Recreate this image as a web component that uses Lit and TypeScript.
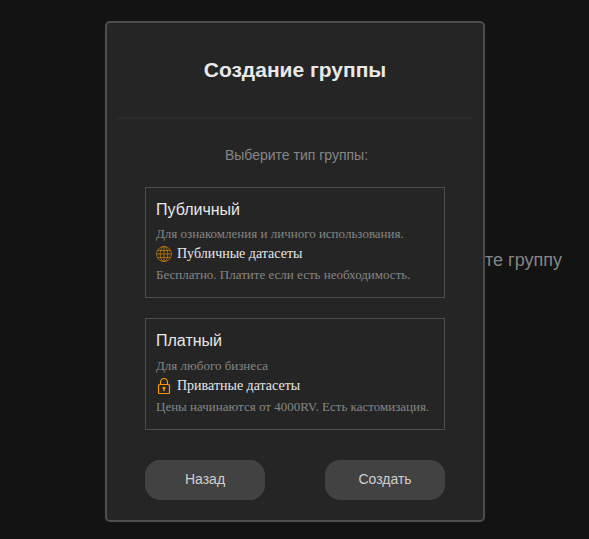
import { LitElement, html, css, svg } from "lit";
import { customElement, property } from "lit/decorators.js";

const globe = svg`
  <circle cx="8" cy="8" r="7.5" />
  <ellipse cx="8" cy="8" rx="3.8" ry="7.5" />
  <path d="M8 .5v15M.5 8h15M2 4.5h12M2 11.5h12" />
`;

const lock = svg`
  <rect x="2.5" y="6.5" width="11" height="9" rx="1" />
  <path d="M4.5 6.5V4.5a3.5 4 0 0 1 7 0v2" />
  <path d="M8 10v3.2" />
  <circle cx="8" cy="10.2" r=".8" />
`;

@customElement("group-card")
class GroupCard extends LitElement {
  @property() heading = "";
  @property() summary = "";
  @property() feature = "";
  @property() price = "";
  @property() icon = "globe";

  static styles = css`
    :host {
      display: flex;
      flex-direction: column;
      box-sizing: border-box;
      border: 1px solid #4d4d4d;
      padding: 10px 10px 12px;
      font: 13px/20px "Liberation Serif", serif;
      color: #858585;
      white-space: nowrap;
    }
    .heading {
      font: 16px/24px "Liberation Sans", sans-serif;
      color: #e8e8e8;
    }
    .summary {
      margin-top: auto;
    }
    .feature {
      display: flex;
      align-items: center;
      gap: 5px;
      font-size: 14px;
      color: #e8e8e8;
    }
    .price {
      margin-top: 1px;
    }
    .icon {
      width: 16px;
      height: 16px;
      fill: none;
      stroke: #ff9800;
    }
    .globe {
      stroke: #c27a0b;
      stroke-width: 0.8;
    }
    .lock {
      stroke-width: 1.2;
    }
  `;

  render() {
    return html`
      <div class="heading">${this.heading}</div>
      <div class="summary">${this.summary}</div>
      <div class="feature">
        <svg class="icon ${this.icon}" viewBox="0 0 16 16">
          ${this.icon === "lock" ? lock : globe}
        </svg>
        <span>${this.feature}</span>
      </div>
      <div class="price">${this.price}</div>
    `;
  }
}

@customElement("app-root")
class AppRoot extends LitElement {
  static styles = css`
    :host {
      display: block;
      position: relative;
      box-sizing: border-box;
      height: 539px;
      padding: 21px 104px 0 105px;
      overflow: hidden;
      background: #131313;
      font-family: "Liberation Sans", Arial, sans-serif;
    }
    .hint {
      position: absolute;
      right: 27px;
      top: 249px;
      font-size: 18px;
      line-height: 22px;
      color: #858585;
      white-space: nowrap;
    }
    .dialog {
      position: relative;
      box-sizing: border-box;
      width: 380px;
      height: 501px;
      border: 2px solid #4d4d4d;
      border-radius: 5px;
      background: #252525;
      display: flex;
      flex-direction: column;
    }
    .title {
      margin: 0 10px;
      height: 94px;
      border-bottom: 2px solid #2b2b2b;
      font-size: 21px;
      font-weight: bold;
      line-height: 94px;
      text-align: center;
      color: #e8e8e8;
    }
    .label {
      margin-top: 26px;
      font-size: 14px;
      line-height: 20px;
      text-align: center;
      color: #858585;
      padding-left: 3px;
    }
    .cards {
      display: grid;
      grid-template-rows: 111px 112px;
      gap: 20px;
      margin: 22px 38px 0;
    }
    .actions {
      display: flex;
      justify-content: space-between;
      margin: 30px 38px 0;
    }
    .button {
      width: 120px;
      height: 40px;
      padding: 0 0 2px;
      border: 0;
      border-radius: 15px;
      background: #424242;
      color: #cfcfcf;
      font: 14px "Liberation Sans", Arial, sans-serif;
    }
  `;

  render() {
    return html`
      <div class="hint">Выберите группу</div>
      <div class="dialog">
        <div class="title">Создание группы</div>
        <div class="label">Выберите тип группы:</div>
        <div class="cards">
          <group-card
            heading="Публичный"
            summary="Для ознакомления и личного использования."
            feature="Публичные датасеты"
            price="Бесплатно. Платите если есть необходимость."
            icon="globe"
          ></group-card>
          <group-card
            heading="Платный"
            summary="Для любого бизнеса"
            feature="Приватные датасеты"
            price="Цены начинаются от 4000RV. Есть кастомизация."
            icon="lock"
          ></group-card>
        </div>
        <div class="actions">
          <button class="button">Назад</button>
          <button class="button">Создать</button>
        </div>
      </div>
    `;
  }
}
